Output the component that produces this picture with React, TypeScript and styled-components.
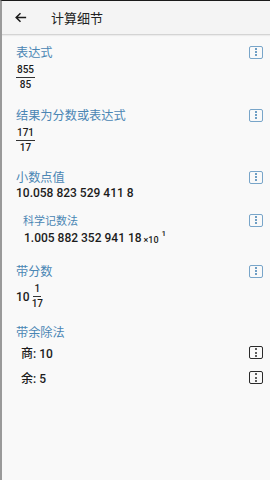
import React from 'react';
import styled, { createGlobalStyle } from 'styled-components';

const GlobalStyle = createGlobalStyle`
  html, body {
    margin: 0;
    padding: 0;
    background: #f9f9f9;
  }
  body {
    font-family: Roboto, "Noto Sans CJK SC", sans-serif;
    color: #1c1c1c;
  }
`;

const blue = '#4a86b4';

const Screen = styled.div`
  width: 270px;
  height: 480px;
  box-sizing: border-box;
  border-top: 1px solid #1a1a1a;
  border-left: 2px solid #9a9a9a;
  background: #f9f9f9;
  display: flex;
  flex-direction: column;
  overflow: hidden;
`;

const Header = styled.div`
  height: 33px;
  flex-shrink: 0;
  display: flex;
  align-items: center;
  background: #f4f4f4;
  border-bottom: 1px solid #d4d4d4;
  box-shadow: 0 1px 1px rgba(0, 0, 0, 0.05);
`;

const BackButton = styled.div`
  width: 49px;
  padding-left: 12px;
  box-sizing: border-box;
  display: flex;
  align-items: center;
`;

const Title = styled.div`
  font-size: 13px;
  color: #222;
`;

const Content = styled.div`
  padding: 9px 6px 0 14px;
  display: flex;
  flex-direction: column;
`;

const Section = styled.div<{ $indent?: number; $gap?: number }>`
  padding-left: ${(p) => p.$indent ?? 0}px;
  margin-bottom: ${(p) => p.$gap ?? 14}px;
`;

const SectionHead = styled.div<{ $small?: boolean }>`
  display: flex;
  align-items: center;
  justify-content: space-between;
  height: 16px;
  font-size: ${(p) => (p.$small ? 11 : 12.2)}px;
  color: ${blue};
  margin-bottom: ${(p) => (p.$small ? 2 : 0)}px;
`;

const MenuBox = styled.div<{ $dark?: boolean }>`
  width: 12px;
  height: 11px;
  border: 1.5px solid ${(p) => (p.$dark ? '#2a2a2a' : '#78a5c9')};
  border-radius: 2px;
  display: flex;
  flex-direction: column;
  align-items: center;
  justify-content: center;
  gap: 1.2px;
  margin-right: 1px;
  flex-shrink: 0;
`;

const Dot = styled.span<{ $dark?: boolean }>`
  width: 2px;
  height: 2px;
  border-radius: 50%;
  background: ${(p) => (p.$dark ? '#2a2a2a' : '#3f7fb2')};
`;

const Fraction = styled.span`
  display: inline-flex;
  flex-direction: column;
  align-items: center;
  font-size: 10px;
  font-weight: 500;
  line-height: 12px;
  margin-top: 4px;
  vertical-align: top;
`;

const Numerator = styled.span`
  border-bottom: 1px solid #333;
  padding: 0 1px 1px;
`;

const Denominator = styled.span`
  padding-top: 1px;
`;

const Value = styled.div<{ $indent?: number }>`
  font-size: 12px;
  font-weight: 500;
  line-height: 16px;
  padding-left: ${(p) => p.$indent ?? 0}px;
  display: flex;
  align-items: center;
`;

const MixedValue = styled.div`
  font-size: 12px;
  font-weight: 500;
  display: flex;
  align-items: center;
  gap: 2px;
  margin-top: 4px;
  & > span {
    margin-top: 0;
  }
`;

const Times = styled.span`
  font-size: 9px;
  margin-left: 2px;
  position: relative;
  top: 2px;
`;

const Sup = styled.sup`
  font-size: 8px;
  position: relative;
  top: -4px;
  margin-left: 3px;
`;

const Row = styled.div`
  display: flex;
  align-items: center;
  justify-content: space-between;
  height: 25px;
  padding-left: 5px;
  font-size: 12px;
  font-weight: 500;
`;

const Menu: React.FC<{ dark?: boolean }> = ({ dark }) => (
  <MenuBox $dark={dark}>
    <Dot $dark={dark} />
    <Dot $dark={dark} />
    <Dot $dark={dark} />
  </MenuBox>
);

const Frac: React.FC<{ n: string; d: string }> = ({ n, d }) => (
  <Fraction>
    <Numerator>{n}</Numerator>
    <Denominator>{d}</Denominator>
  </Fraction>
);

export default function App() {
  return (
    <>
      <GlobalStyle />
      <Screen>
        <Header>
          <BackButton>
            <svg width="13" height="13" viewBox="0 0 24 24" fill="none" stroke="#1a1a1a" strokeWidth="2.8" strokeLinecap="square">
              <path d="M21 12H5M11 5l-7 7 7 7" />
            </svg>
          </BackButton>
          <Title>计算细节</Title>
        </Header>
        <Content>
          <Section $gap={16}>
            <SectionHead>
              表达式
              <Menu />
            </SectionHead>
            <Frac n="855" d="85" />
          </Section>
          <Section $gap={15}>
            <SectionHead>
              结果为分数或表达式
              <Menu />
            </SectionHead>
            <Frac n="171" d="17" />
          </Section>
          <Section $gap={11}>
            <SectionHead>
              小数点值
              <Menu />
            </SectionHead>
            <Value>10.058 823 529 411 8</Value>
          </Section>
          <Section $indent={7} $gap={17}>
            <SectionHead $small>
              科学记数法
              <Menu />
            </SectionHead>
            <Value $indent={1}>
              1.005 882 352 941 18
              <Times>×10</Times>
              <Sup>1</Sup>
            </Value>
          </Section>
          <Section $gap={14}>
            <SectionHead>
              带分数
              <Menu />
            </SectionHead>
            <MixedValue>
              10
              <Frac n="1" d="17" />
            </MixedValue>
          </Section>
          <Section>
            <SectionHead>带余除法</SectionHead>
            <Row>
              商: 10
              <Menu dark />
            </Row>
            <Row>
              余: 5
              <Menu dark />
            </Row>
          </Section>
        </Content>
      </Screen>
    </>
  );
}
